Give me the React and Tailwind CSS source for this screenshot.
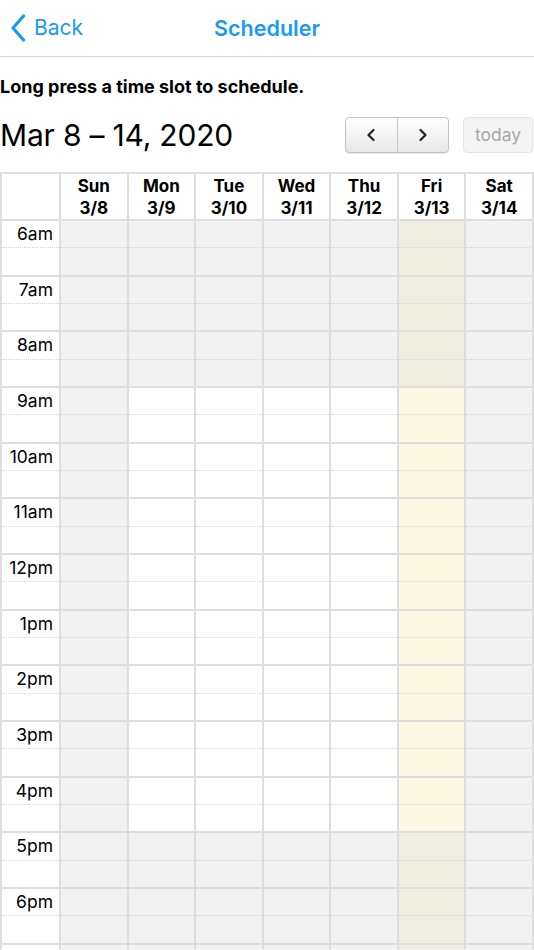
import React from 'react';

const days = [
  { name: 'Sun', date: '3/8', weekend: true },
  { name: 'Mon', date: '3/9' },
  { name: 'Tue', date: '3/10' },
  { name: 'Wed', date: '3/11' },
  { name: 'Thu', date: '3/12' },
  { name: 'Fri', date: '3/13', today: true },
  { name: 'Sat', date: '3/14', weekend: true },
];

const hours = [6, 7, 8, 9, 10, 11, 12, 13, 14, 15, 16, 17, 18, 19, 20];

const label = (h) => {
  if (h === 12) return '12pm';
  return h < 12 ? `${h}am` : `${h - 12}pm`;
};

function cellBg(day, h) {
  const business = h >= 9 && h < 17;
  if (day.today) return business ? 'bg-[#fcf8e3]' : 'bg-[#efede0]';
  if (day.weekend || !business) return 'bg-[#f2f2f2]';
  return 'bg-white';
}

function Slot({ className, children }) {
  return (
    <div className={`flex flex-col h-[53.67px] ${className}`}>
      <div className="flex-1 border-b border-dotted border-[#d4d4d4]">{children}</div>
      <div className="flex-1" />
    </div>
  );
}

export default function App() {
  return (
    <div className="w-[534px] bg-white text-black font-['Inter','Liberation_Sans',Arial,sans-serif]">
      {/* nav bar */}
      <header className="h-[57px] border-b border-[#d8d8d8] grid grid-cols-[1fr_auto_1fr] items-center">
        <button className="flex items-center gap-[8px] pl-[10px] text-[#1b9af4] text-[21px]">
          <svg width="16" height="28" viewBox="0 0 16 28" fill="none">
            <path d="M13.5 2 L3 14 L13.5 26" stroke="currentColor" strokeWidth="3.2" strokeLinecap="round" strokeLinejoin="round" />
          </svg>
          <span>Back</span>
        </button>
        <h1 className="text-[21.5px] font-semibold text-[#1b9af4]">Scheduler</h1>
        <div />
      </header>

      <p className="pt-[20px] text-[18px] leading-[20px] font-bold">Long press a time slot to schedule.</p>

      <div className="mt-[20px] flex items-center h-[36px]">
        <h2 className="text-[30px] leading-none flex-1 tracking-[-0.2px]">Mar 8 – 14, 2020</h2>
        <div className="flex h-[36px] w-[104px] rounded-[4px] border border-[#c4c4c4] shadow-[0_1px_1px_rgba(0,0,0,0.1)] bg-gradient-to-b from-white to-[#e8e8e8] overflow-hidden">
          <button className="flex-1 flex items-center justify-center border-r border-[#c8c8c8]">
            <svg width="12" height="14" viewBox="0 0 12 14" fill="none">
              <path d="M8.5 2 L3.5 7 L8.5 12" stroke="#222" strokeWidth="2.2" strokeLinecap="round" strokeLinejoin="round" />
            </svg>
          </button>
          <button className="flex-1 flex items-center justify-center">
            <svg width="12" height="14" viewBox="0 0 12 14" fill="none">
              <path d="M3.5 2 L8.5 7 L3.5 12" stroke="#222" strokeWidth="2.2" strokeLinecap="round" strokeLinejoin="round" />
            </svg>
          </button>
        </div>
        <button className="ml-[14px] mr-[1px] h-[36px] w-[70px] rounded-[4px] border border-[#e4e4e4] bg-[#f4f4f4] text-[17.5px] text-[#a8a8a8]">
          today
        </button>
      </div>

      {/* calendar */}
      <div className="mt-[19px] grid grid-cols-[57px_repeat(7,minmax(0,1fr))] gap-[2px] bg-[#dedede] border-2 border-[#dedede]">
        <div className="bg-white h-[45px]" />
        {days.map((d) => (
          <div key={d.name} className="bg-white h-[45px] flex flex-col items-center justify-center text-[17px] leading-[22px] font-bold">
            <span>{d.name}</span>
            <span>{d.date}</span>
          </div>
        ))}
        {hours.map((h) => (
          <React.Fragment key={h}>
            <Slot className="bg-white">
              <div className="text-right pr-[6px] pt-[2px] text-[17.5px] leading-[22px]">{label(h)}</div>
            </Slot>
            {days.map((d) => (
              <Slot key={d.name} className={cellBg(d, h)} />
            ))}
          </React.Fragment>
        ))}
      </div>
    </div>
  );
}
